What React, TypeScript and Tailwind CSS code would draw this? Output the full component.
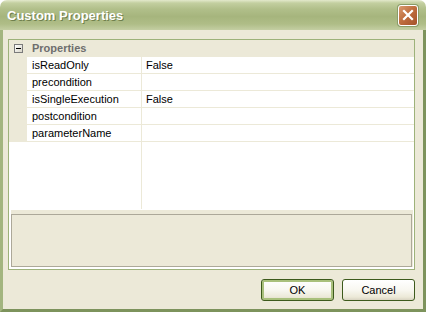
import React from 'react';

const rows = [
  { name: 'isReadOnly', value: 'False' },
  { name: 'precondition', value: '' },
  { name: 'isSingleExecution', value: 'False' },
  { name: 'postcondition', value: '' },
  { name: 'parameterName', value: '' },
];

function CloseButton() {
  return (
    <div className="w-[20px] h-[21px] rounded-[3px] border border-white bg-[linear-gradient(135deg,#d99a70_0%,#c06f3f_45%,#a5522a_100%)] flex items-center justify-center shadow-[0_0_0_1px_#8a9c68]">
      <svg width="12" height="12" viewBox="0 0 12 12">
        <path d="M2 2 L10 10 M10 2 L2 10" stroke="#ffffff" strokeWidth="2.2" strokeLinecap="square" />
      </svg>
    </div>
  );
}

function XpButton({ label, isDefault }: { label: string; isDefault?: boolean }) {
  return (
    <button
      className={
        'w-[73px] h-[22px] rounded-[3px] border border-[#3d5a1c] text-[11px] text-black bg-[linear-gradient(to_bottom,#ffffff_0%,#f8f7f0_50%,#ece9d8_85%,#d9d4c2_100%)] ' +
        (isDefault ? 'shadow-[inset_0_0_0_2px_#a9c07c]' : '')
      }
    >
      {label}
    </button>
  );
}

export default function App() {
  return (
    <div className="w-[426px] h-[312px] bg-white font-['Liberation_Sans',Arial,sans-serif]">
      <div className="w-[426px] h-[312px] flex flex-col rounded-t-[7px] overflow-hidden">
        {/* title bar */}
        <div className="h-[30px] shrink-0 flex items-center justify-between pl-[7px] pr-[8px] bg-[linear-gradient(to_bottom,#e3e9cc_0%,#c3cfa0_10%,#b1bf8a_30%,#a6b57d_55%,#afbd87_80%,#c4cea2_100%)]">
          <span className="text-[13px] font-bold text-white [text-shadow:1px_1px_0_#6f7f4c] pt-[1px]">
            Custom Properties
          </span>
          <CloseButton />
        </div>

        {/* body */}
        <div className="flex-1 flex flex-col bg-[#ece9d8] border-l-[3px] border-r-[3px] border-b-[3px] border-l-[#a3b57f] border-r-[#7d935c] border-b-[#7d935c]">
          {/* property grid */}
          <div className="mt-[9px] ml-[5px] w-[407px] h-[231px] border border-[#9db27a] bg-white flex flex-col text-[11px] text-black">
            <div className="h-[17px] shrink-0 bg-[#ece9d8] flex items-center">
              <div className="w-[18px] flex justify-center">
                <div className="w-[9px] h-[9px] border border-[#7b7b7b] bg-[linear-gradient(135deg,#ffffff,#d8d5c8)] flex items-center justify-center">
                  <div className="w-[5px] h-px bg-black" />
                </div>
              </div>
              <span className="pl-[5px] font-bold text-[#6e6e6e]">Properties</span>
            </div>
            {rows.map((r) => (
              <div key={r.name} className="h-[17px] shrink-0 flex">
                <div className="w-[18px] bg-[#ece9d8]" />
                <div className="flex-1 flex border-b border-[#ece9d8]">
                  <div className="w-[115px] border-r border-[#ece9d8] pl-[5px] leading-[16px]">{r.name}</div>
                  <div className="flex-1 pl-[4px] leading-[16px]">{r.value}</div>
                </div>
              </div>
            ))}
            <div className="flex-1 pb-[1px]">
              <div className="w-[133px] h-full border-r border-[#ece9d8]" />
            </div>
            <div className="h-[59px] shrink-0 ml-[2px] mr-[1px] pb-[2px]">
              <div className="h-full bg-[#ece9d8] pt-[4px] pr-[1px]">
                <div className="h-full border border-[#aca899]" />
              </div>
            </div>
          </div>

          {/* buttons */}
          <div className="mt-[9px] flex justify-end gap-[8px] pr-[8px]">
            <XpButton label="OK" isDefault />
            <XpButton label="Cancel" />
          </div>
        </div>
      </div>
    </div>
  );
}
